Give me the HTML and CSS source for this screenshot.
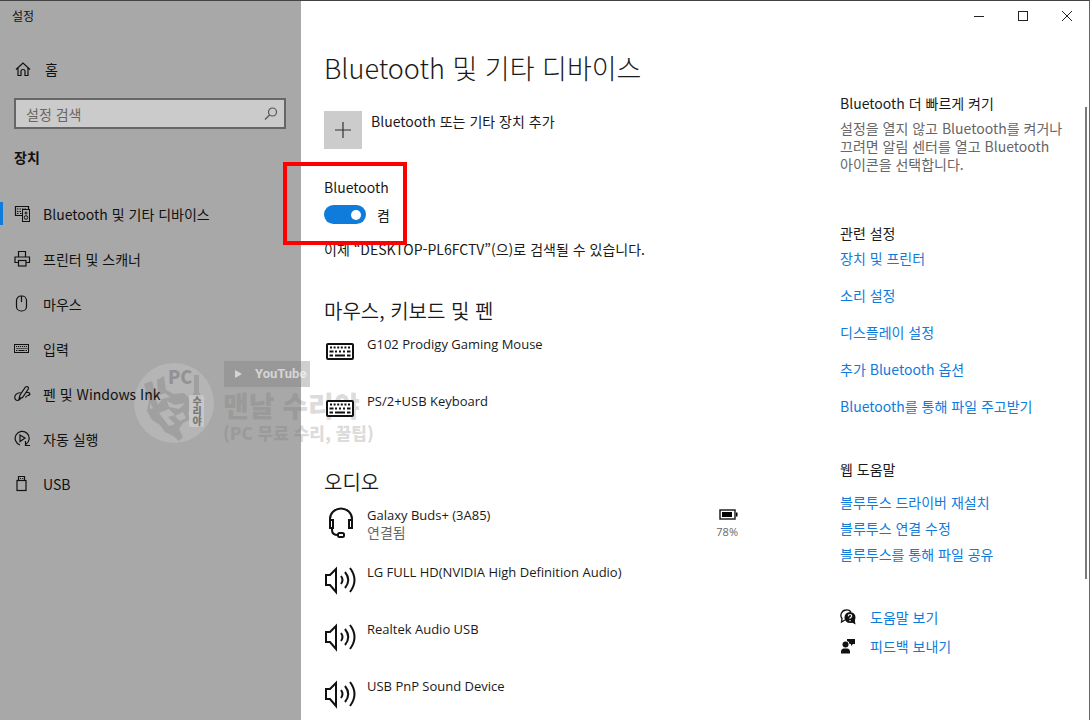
FILE: index.html
```html
<!DOCTYPE html>
<html lang="ko">

<head>
  <meta charset="utf-8">
  <meta name="viewport" content="width=device-width, initial-scale=1">
  <title>설정</title>
  <link rel="stylesheet" href="styles.css">
</head>

<body>
  <!-- shared icons -->
  <svg class="defs" width="0" height="0">
    <symbol id="keyboard" viewBox="0 0 34 34">
      <rect x="3" y="9" width="26" height="15" rx="1" fill="#fff" stroke="#111" stroke-width="2"/>
      <path d="M6 12.500h20" stroke="#111" stroke-width="2" stroke-dasharray="2 1.600"/>
      <path d="M5.500 16.500h4M11 16.500h2M15 16.500h2M19 16.500h2M23 16.500h3.500" stroke="#111" stroke-width="2"/>
      <path d="M5.500 20.500h3.500M11 20.500h10M23 20.500h3.500" stroke="#111" stroke-width="2"/>
    </symbol>
    <symbol id="speaker" viewBox="0 0 34 34">
      <g fill="none" stroke="#111" stroke-width="2">
        <path d="M2 12h4l6-6v23L6 22H2z"/>
        <path d="M17 13q3 4 0 8M21 9q6.500 8 0 16M26 5q9 12 0 24"/>
      </g>
    </symbol>
  </svg>

  <div class="window">
    <aside class="sidebar">
      <div class="app-name">설정</div>
      <a class="home" href="#">
        <svg width="16" height="16" viewBox="0 0 16 16"><path d="M1 8.500L8 2l7 6.500M3 7v7.500h3V10q0-1.500 2-1.500t2 1.500v4.500h3V7" fill="none" stroke="#111" stroke-width="1.200"/></svg>
        <span>홈</span>
      </a>
      <form class="search">
        <input type="text" placeholder="설정 검색" aria-label="설정 검색">
        <svg width="14" height="14" viewBox="0 0 14 14"><g fill="none" stroke="#555" stroke-width="1.200"><circle cx="8.500" cy="5" r="4"/><path d="M5.500 8L1 12.500"/></g></svg>
      </form>
      <h3>장치</h3>
      <nav>
        <a class="active" href="#">
          <svg width="17" height="17" viewBox="0 0 17 17"><g fill="none" stroke="#111"><path d="M8 10.500H1.500v-9h13V4" stroke-width="1.200"/><path d="M3 4h10M3 6.500h5M3 8.500h2M6 8.500h2" stroke-dasharray="1.500 1"/><rect x="8.500" y="4.500" width="7" height="12"/><circle cx="12" cy="12.500" r="1.800"/><path d="M12 6.500v3M10.500 8h3"/></g></svg>
          <span>Bluetooth 및 기타 디바이스</span>
        </a>
        <a href="#">
          <svg width="17" height="17" viewBox="0 0 17 17"><g fill="none" stroke="#111" stroke-width="1.200"><path d="M4.500 7V1.500h7V7M4 12.500H1V7h14.500v5.500H12"/><rect x="4.500" y="10.500" width="7.500" height="5.500"/></g></svg>
          <span>프린터 및 스캐너</span>
        </a>
        <a href="#">
          <svg width="17" height="17" viewBox="0 0 17 17"><g fill="none" stroke="#111" stroke-width="1.200"><rect x="2.500" y="1" width="10" height="15" rx="4.500"/><path d="M7.500 1v6"/></g></svg>
          <span>마우스</span>
        </a>
        <a href="#">
          <svg width="17" height="17" viewBox="0 0 17 17"><g fill="none" stroke="#111"><rect x=".5" y="4.500" width="14" height="8"/><path d="M2 6.500h11M2.500 8.500h11" stroke-dasharray="1.200 .8"/><path d="M2 10.500h1.500M4.500 10.500h6M11.500 10.500H13"/></g></svg>
          <span>입력</span>
        </a>
        <a href="#">
          <svg width="17" height="17" viewBox="0 0 17 17"><g fill="none" stroke="#111" stroke-width="1.200"><path d="M5 14l1-4 5.500-8q1.500-1 2.500 0t0 2.500l-5.500 8z"/><path d="M6.500 7.500Q1 8.500.8 12T4 15.500q2-.5 3-3M12 7.500q3.500-.5 3.800 1T14 10.500t-2.500 2"/></g></svg>
          <span>펜 및 Windows Ink</span>
        </a>
        <a href="#">
          <svg width="17" height="17" viewBox="0 0 17 17"><g fill="none" stroke="#111" stroke-width="1.200"><path d="M6 15A7 7 0 1 1 12 14.200M11.500 11v4.500H16"/><path d="M6 5v6.500L11 8z"/></g></svg>
          <span>자동 실행</span>
        </a>
        <a href="#">
          <svg width="17" height="17" viewBox="0 0 17 17"><g fill="none" stroke="#111" stroke-width="1.200"><path d="M4.500 5.500v-4h6v4"/><rect x="3" y="5.500" width="9" height="10"/><path d="M6 3.500h1M8.200 3.500h1"/></g></svg>
          <span>USB</span>
        </a>
      </nav>
    </aside>

    <main class="main">
      <div class="titlebar">
        <button type="button" aria-label="최소화"><svg width="12" height="12" viewBox="0 0 12 12"><path d="M1 6.500h10" stroke="#222"/></svg></button>
        <button type="button" aria-label="최대화"><svg width="12" height="12" viewBox="0 0 12 12"><rect x="1.500" y="1.500" width="9" height="9" fill="none" stroke="#222"/></svg></button>
        <button type="button" aria-label="닫기"><svg width="12" height="12" viewBox="0 0 12 12"><path d="M1 1l10 10M11 1L1 11" stroke="#222"/></svg></button>
      </div>

      <div class="columns">
        <section class="devices">
          <h1>Bluetooth 및 기타 디바이스</h1>

          <div class="add">
            <button type="button" id="add-device"><svg width="16" height="16" viewBox="0 0 16 16"><path d="M8 0v16M0 8h16" stroke="#333" stroke-width="1.200"/></svg></button>
            <label for="add-device">Bluetooth 또는 기타 장치 추가</label>
          </div>

          <div class="power">
            <label for="bluetooth">Bluetooth</label>
            <div class="switch">
              <input type="checkbox" id="bluetooth" checked>
              <span>켬</span>
            </div>
            <div class="highlight"></div>
          </div>
          <p class="visible-as">이제 “DESKTOP-PL6FCTV”(으)로 검색될 수 있습니다.</p>

          <h2>마우스, 키보드 및 펜</h2>
          <ul>
            <li><svg class="device-icon"><use href="#keyboard"/></svg><div>G102 Prodigy Gaming Mouse</div></li>
            <li><svg class="device-icon"><use href="#keyboard"/></svg><div>PS/2+USB Keyboard</div></li>
          </ul>

          <h2 class="audio">오디오</h2>
          <ul>
            <li>
              <svg class="device-icon" viewBox="0 0 34 34"><g fill="none" stroke="#111" stroke-width="2"><path d="M6 14v-1a11 10.500 0 0 1 22 0v1"/><path d="M6 14h3v8H6zM25 14h3v8h-3zM8 22v2q0 5 6 5"/><rect x="14" y="27" width="6" height="4" rx="1.500"/></g></svg>
              <div>Galaxy Buds+ (3A85)<br><small>연결됨</small></div>
              <div class="battery">
                <svg width="19" height="11" viewBox="0 0 19 11"><rect x="1" y="1" width="15" height="9" fill="#fff" stroke="#222" stroke-width="1.500"/><path d="M3 3h10v5H3zM17 3.500h1.500v4H17z"/></svg>
                <span>78%</span>
              </div>
            </li>
            <li><svg class="device-icon"><use href="#speaker"/></svg><div>LG FULL HD(NVIDIA High Definition Audio)</div></li>
            <li><svg class="device-icon"><use href="#speaker"/></svg><div>Realtek Audio USB</div></li>
            <li><svg class="device-icon"><use href="#speaker"/></svg><div>USB PnP Sound Device</div></li>
          </ul>
        </section>

        <aside class="related">
          <h4>Bluetooth 더 빠르게 켜기</h4>
          <p>설정을 열지 않고 Bluetooth를 켜거나<br>끄려면 알림 센터를 열고 Bluetooth<br>아이콘을 선택합니다.</p>

          <h4>관련 설정</h4>
          <div class="links">
            <a href="#">장치 및 프린터</a>
            <a href="#">소리 설정</a>
            <a href="#">디스플레이 설정</a>
            <a href="#">추가 Bluetooth 옵션</a>
            <a href="#">Bluetooth를 통해 파일 주고받기</a>
          </div>

          <h4>웹 도움말</h4>
          <div class="links web">
            <a href="#">블루투스 드라이버 재설치</a>
            <a href="#">블루투스 연결 수정</a>
            <a href="#">블루투스를 통해 파일 공유</a>
          </div>

          <div class="links support">
            <a href="#">
              <svg width="16" height="16" viewBox="0 0 16 16"><path d="M5 11L1.500 13l.5-3.500Q0 7 1.500 4T6 1q3-.5 5 2" fill="none" stroke="#111" stroke-width="1.300"/><circle cx="10" cy="8.500" r="5.500" fill="#111"/><path d="M11 13l4.500 2.500L14.500 10z" fill="#111"/><path d="M8.300 7.200q0-1.700 1.700-1.700t1.700 1.500q0 .9-1.700 2v.8M10 11v1.200" fill="none" stroke="#fff" stroke-width="1.200"/></svg>
              <span>도움말 보기</span>
            </a>
            <a href="#">
              <svg width="16" height="16" viewBox="0 0 16 16" fill="#111"><circle cx="5.500" cy="6.500" r="3"/><path d="M1 15.500V14q0-3.500 3-3.500h3q3 0 3 3.500v1.500zM7 1h8v5h-2l-2 2V6H9.500Q9.500 3.500 7 3z"/></svg>
              <span>피드백 보내기</span>
            </a>
          </div>
        </aside>
      </div>
      <div class="scroll-thumb"></div>
    </main>

    <div class="watermark">
      <svg width="82" height="88" viewBox="0 0 82 88">
        <circle cx="41" cy="44" r="40" fill="#c8c8c8" fill-opacity=".4"/>
        <g fill="#707070" fill-opacity=".3">
          <path d="M11 25l8-3 3 12 3-1-1-12 7-4 2 14 8 4 10-1 6 6 2 10-4 4 3 6-8 4-4 6 4 8-4 4-6-5-8-4-5-7-8-5-5-9 2-10z"/>
          <path d="M61 16h5v17l3 6H58l3-6z"/>
        </g>
        <g fill="#c4c4c4" fill-opacity=".6">
          <path d="M22 38l10-4 5 4-8 2-4 6zM34 42l8 4 10-2-6 6-10-2zM26 54l10-4 6 6-7 2 7 7-6 2zM42 57l8-4 3 6-6 3zM17 44l3 5-3 1z"/>
        </g>
        <rect x="56" y="36" width="15" height="32" rx="2" fill="#ccc" fill-opacity=".8"/>
        <text class="mark-pc" x="35" y="25">PC</text>
        <text class="mark-side" x="64" y="37">수리야</text>
      </svg>
      <div class="mark-text">
        <div class="mark-bar"><svg width="8" height="8" viewBox="0 0 8 8"><path d="M0 0l7 4-7 4z" fill="#d4d4d4"/></svg>YouTube</div>
        <div class="mark-name">맨날 수리야</div>
        <div class="mark-sub">(PC 무료 수리, 꿀팁)</div>
      </div>
    </div>
  </div>
</body>

</html>
```
FILE: styles.css
```css
* {
	box-sizing: border-box;
}

body {
	margin: 0;
	font-family: "Noto Sans CJK KR", sans-serif;
	font-size: 14px;
	line-height: 18px;
	color: #1a1a1a;
}

h1, h2, h3, h4, p, ul {
	margin: 0;
	padding: 0;
	font-weight: 400;
}

a {
	color: inherit;
	text-decoration: none;
}

svg {
	flex: none;
}

button {
	padding: 0;
	border: 0;
	background: none;
}

.defs {
	position: absolute;
}

.window {
	position: relative;
	display: grid;
	grid-template-columns: 301px 1fr;
	height: 100vh;
	overflow: hidden;
	border-top: 1px solid #444;
	border-right: 1px solid #666;
}

/* left side */
.sidebar {
	background: #a8a8a8;
	color: #111;
}

.app-name {
	padding-left: 12px;
	font-size: 12px;
	line-height: 30px;
}

.home {
	display: flex;
	align-items: center;
	gap: 14px;
	height: 40px;
	margin-top: 18px;
	padding-left: 15px;
}

.search {
	display: flex;
	align-items: center;
	height: 31px;
	margin: 9px 15px 0 14px;
	padding: 0 6px 0 10px;
	border: 2px solid #666;
	background: #cbcbcb;
}

.search input {
	flex: 1;
	min-width: 0;
	padding: 0;
	border: 0;
	outline: 0;
	background: none;
	font: inherit;
}

.search input::placeholder {
	color: #666;
}

.sidebar h3 {
	margin: 19px 0 25px 14px;
	font-size: 14px;
	font-weight: 700;
}

nav {
	position: relative;
	z-index: 1;
}

nav a {
	display: flex;
	align-items: center;
	gap: 12px;
	height: 45px;
	padding-left: 14px;
}

nav .active {
	background: linear-gradient(#0f7bdb, #0f7bdb) left center / 3px 23px no-repeat;
}

/* right side */
.main {
	position: relative;
	min-width: 0;
	background: #fff;
}

.titlebar {
	display: flex;
	justify-content: flex-end;
	height: 30px;
}

.titlebar button {
	display: flex;
	align-items: center;
	justify-content: center;
	width: 44px;
}

.columns {
	display: grid;
	grid-template-columns: 1fr 249px;
	gap: 102px;
	padding-left: 23px;
}

h1 {
	margin-top: 17px;
	font-size: 27px;
	font-weight: 300;
	line-height: 40px;
	white-space: nowrap;
}

.add {
	display: flex;
	gap: 9px;
	margin: 23px 0 28px;
}

.add button {
	display: flex;
	align-items: center;
	justify-content: center;
	width: 38px;
	height: 38px;
	background: #ccc;
}

.add label {
	padding-top: 1px;
}

.power {
	position: relative;
}

.power label {
	display: block;
	line-height: 20px;
}

.switch {
	display: flex;
	align-items: center;
	gap: 11px;
	margin: 8px 0 15px;
}

.switch input {
	display: flex;
	align-items: center;
	justify-content: flex-end;
	width: 42px;
	height: 19px;
	margin: 0;
	padding: 0 5px;
	border-radius: 10px;
	appearance: none;
	background: #0f7bdb;
}

.switch input::before {
	content: "";
	width: 10px;
	height: 10px;
	border-radius: 50%;
	background: #fff;
}

.highlight {
	position: absolute;
	top: -15px;
	left: -41px;
	width: 124px;
	height: 83px;
	border: 4px solid #f00;
}

.visible-as {
	line-height: 20px;
}

h2 {
	margin: 38px 0 10px;
	font-size: 20px;
	font-weight: 350;
	line-height: 28px;
}

h2.audio {
	margin-top: 19px;
}

li {
	display: flex;
	gap: 9px;
	height: 57px;
	font-family: "Open Sans", "Noto Sans CJK KR", sans-serif;
	font-size: 13px;
}

.device-icon {
	position: relative;
	z-index: 1;
	width: 34px;
	height: 34px;
}

small {
	font-size: 14px;
	color: #666;
}

.battery {
	display: flex;
	flex-direction: column;
	align-items: flex-end;
	gap: 3px;
	margin-left: auto;
	padding-top: 3px;
	font-size: 11px;
	color: #666;
}

/* related links */
.related {
	padding-top: 63px;
}

.related h4 {
	margin-bottom: 7px;
}

.related p {
	margin-bottom: 51px;
	color: #666;
}

.links {
	display: flex;
	flex-direction: column;
	gap: 19px;
	margin-bottom: 45px;
	color: #0f7bdb;
}

.links.web {
	gap: 8px;
	margin: 15px 0 45px;
}

.links.support {
	gap: 11px;
}

.support a {
	display: flex;
	align-items: center;
	gap: 14px;
}

.scroll-thumb {
	position: absolute;
	top: 106px;
	right: 2px;
	width: 2px;
	height: 472px;
	background: #7a7a7a;
}

/* channel mark over both sides */
.watermark {
	position: absolute;
	top: 358px;
	left: 133px;
	z-index: 0;
	display: flex;
	gap: 8px;
	pointer-events: none;
	color: rgba(115, 115, 115, .27);
	font-weight: 900;
	white-space: nowrap;
}

.mark-bar {
	display: flex;
	align-items: center;
	gap: 12px;
	width: 86px;
	height: 26px;
	margin: 2px 0 0 1px;
	padding-left: 11px;
	background: rgba(125, 125, 125, .37);
	color: rgba(255, 255, 255, .6);
	font-family: Roboto, sans-serif;
	font-size: 13px;
	font-weight: 700;
}

.mark-name {
	font-size: 28px;
	line-height: 36px;
}

.mark-sub {
	font-size: 17px;
	line-height: 20px;
}

.mark-pc {
	fill: #707070;
	fill-opacity: .5;
	font-size: 18px;
}

.mark-side {
	fill: #777;
	font-size: 10px;
	writing-mode: vertical-rl;
}
```
